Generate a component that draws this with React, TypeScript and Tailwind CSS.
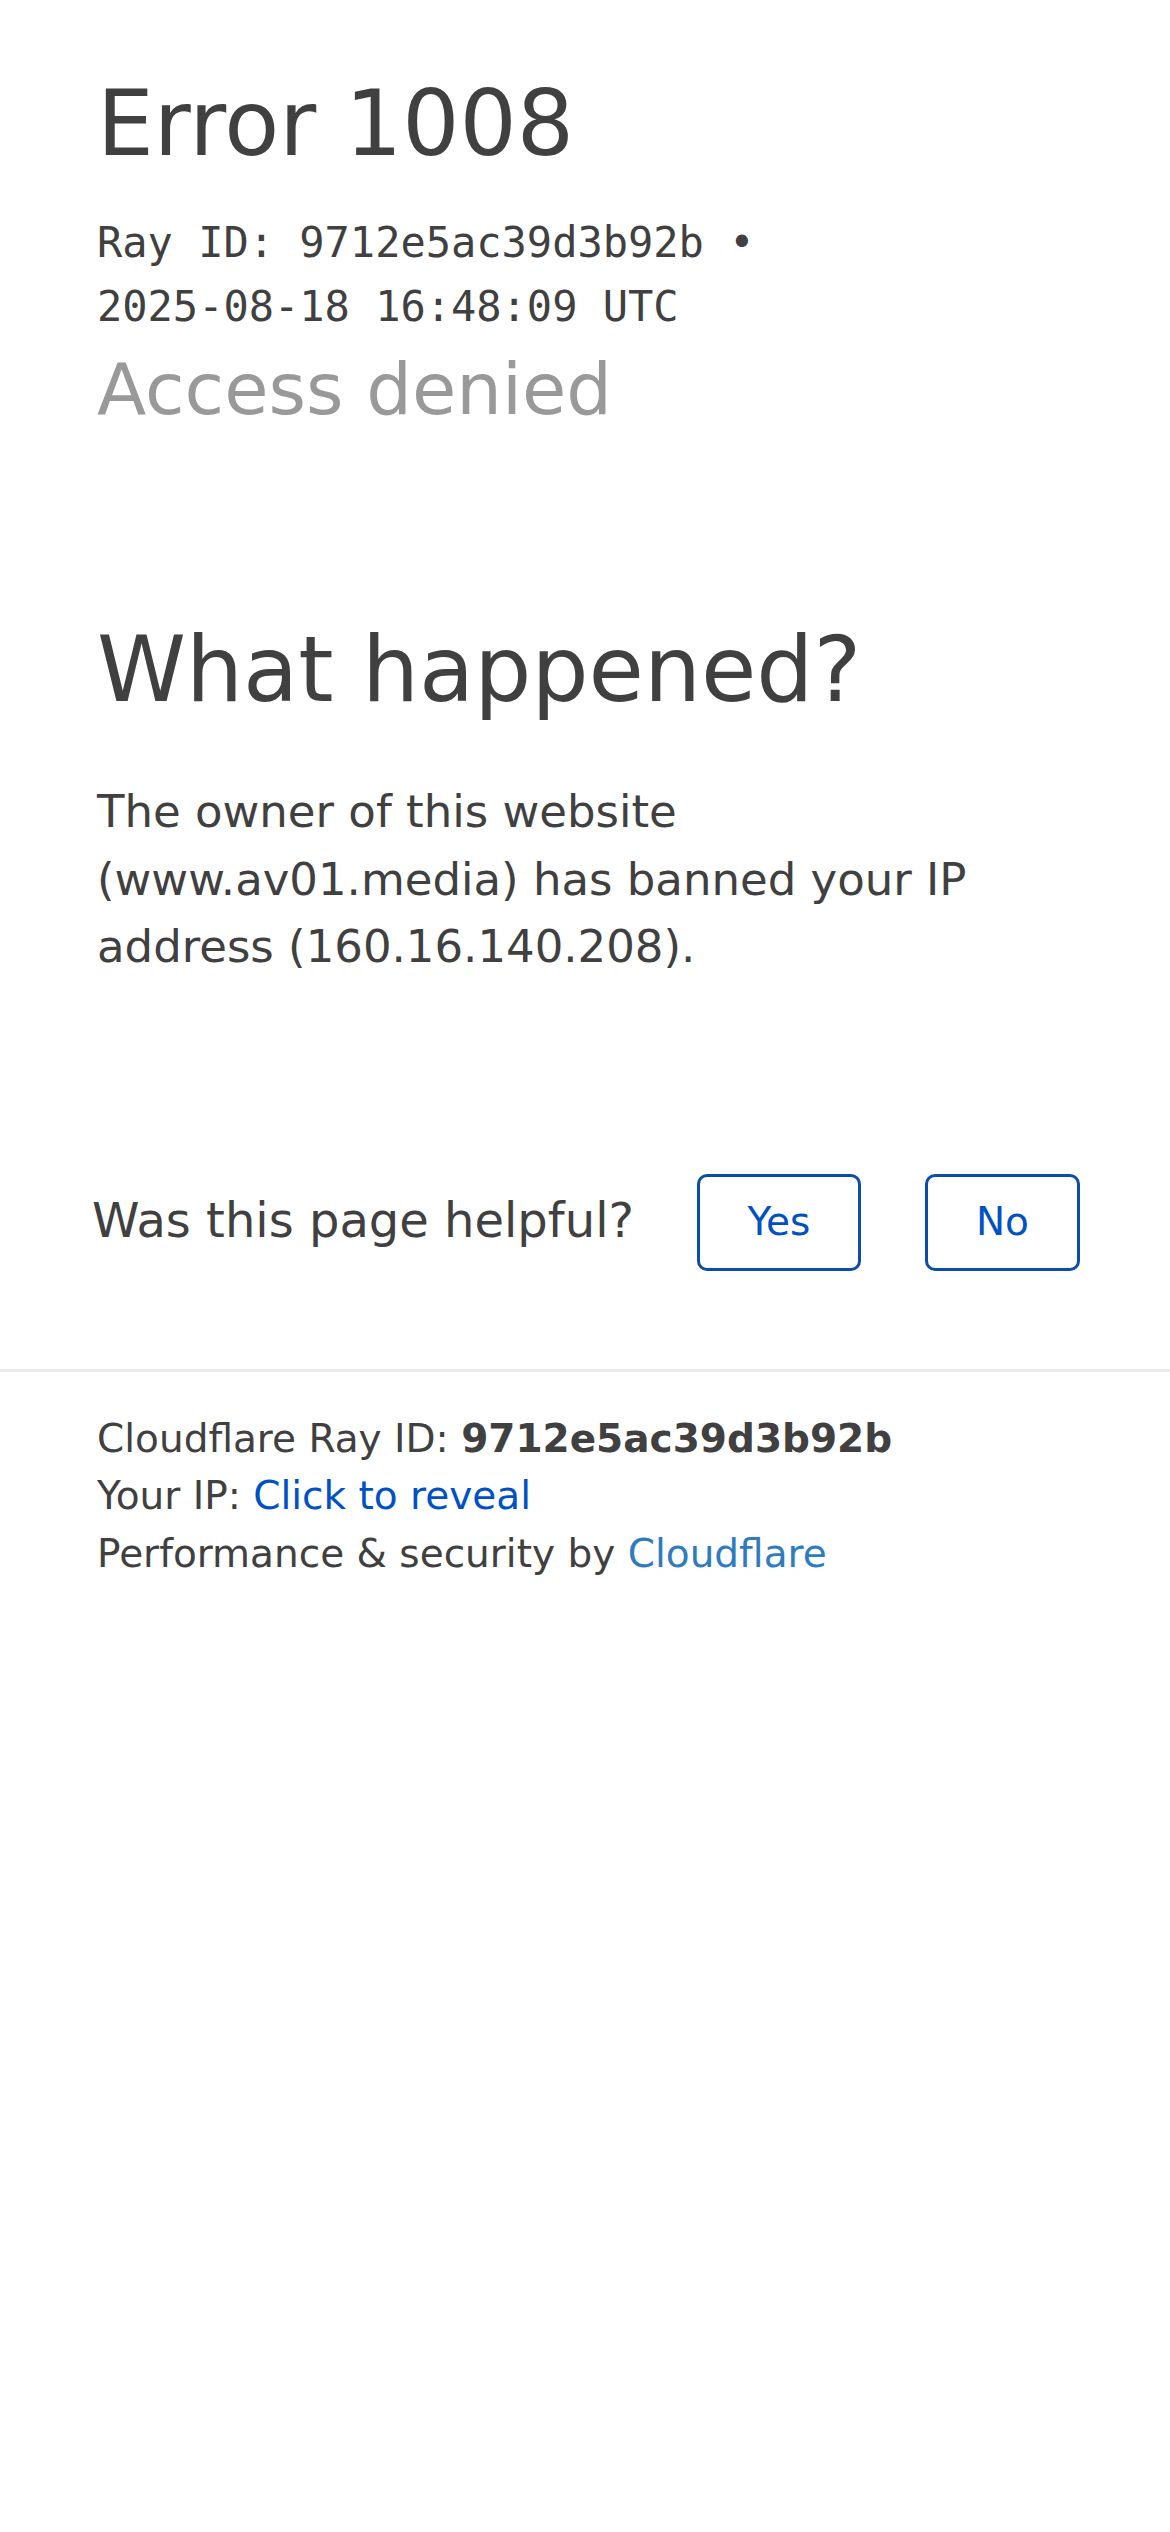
import React from 'react';

const App: React.FC = () => {
  const rayId = '9712e5ac39d3b92b';

  return (
    <div className="min-h-screen bg-white text-[#404040] font-['DejaVu_Sans',sans-serif]">
      {/* Header */}
      <div className="px-[97px] pt-[68px]">
        <h1 className="text-[90px] leading-[112px] font-normal">Error 1008</h1>
        <div className="mt-[31px] font-['DejaVu_Sans_Mono',monospace] text-[42px] leading-[64px]">
          <div>Ray ID: {rayId} •</div>
          <div>2025-08-18 16:48:09 UTC</div>
        </div>
        <h2 className="mt-[5px] text-[72px] leading-[90px] text-[#999999]">Access denied</h2>
      </div>

      {/* What happened */}
      <div className="px-[97px] mt-[180px]">
        <h2 className="text-[90px] leading-[112px]">What happened?</h2>
        <p className="mt-[52px] text-[45px] leading-[67.5px] w-[900px]">
          The owner of this website (www.av01.media) has banned your IP address (160.16.140.208).
        </p>
      </div>

      {/* Feedback */}
      <div className="flex items-center pl-[92px] mt-[193px] h-[97px]">
        <span className="text-[48px] leading-none -mt-[4px]">Was this page helpful?</span>
        <button className="ml-[63px] w-[164px] h-[97px] border-[3px] border-[#0b4ea6] rounded-[10px] text-[39px] text-[#0051c3] bg-white">
          Yes
        </button>
        <button className="ml-[64px] w-[155px] h-[97px] border-[3px] border-[#0b4ea6] rounded-[10px] text-[39px] text-[#0051c3] bg-white">
          No
        </button>
      </div>

      <div className="mt-[98px] h-[3px] bg-[#ebebeb]"></div>

      {/* Footer */}
      <div className="px-[97px] pt-[38px] text-[39px] leading-[57.5px]">
        <div>
          Cloudflare Ray ID: <span className="font-bold">{rayId}</span>
        </div>
        <div>
          Your IP: <span className="text-[#0051c3]">Click to reveal</span>
        </div>
        <div>
          Performance &amp; security by <span className="text-[#2f7bbf]">Cloudflare</span>
        </div>
      </div>
    </div>
  );
};

export default App;
